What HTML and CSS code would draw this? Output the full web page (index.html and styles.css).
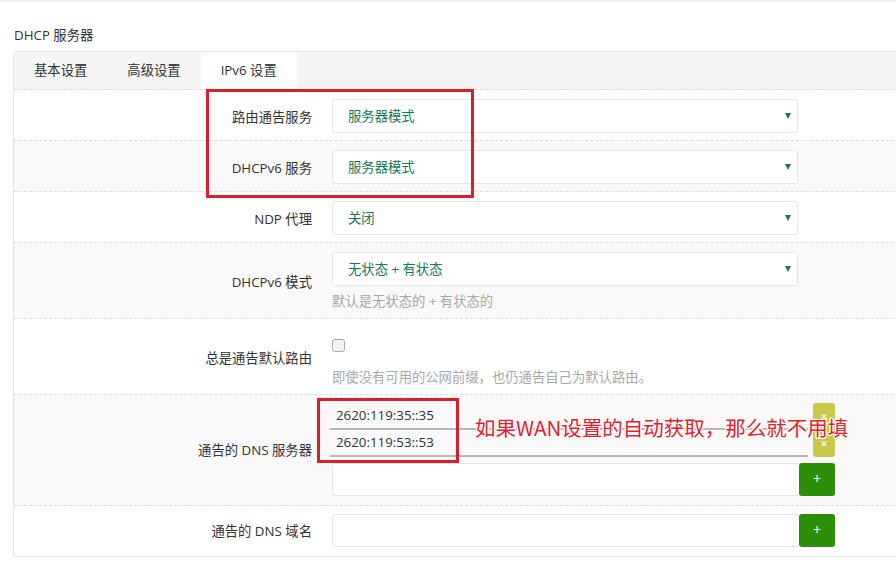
FILE: index.html
```html
<!DOCTYPE html>
<html lang="zh-CN">
<head>
<meta charset="utf-8">
<title>DHCP 服务器</title>
<link rel="stylesheet" href="styles.css">
</head>
<body>
<div class="page">
  <div class="topline"></div>
  <h3 class="title">DHCP 服务器</h3>
  <div class="panel">
    <div class="tabs">
      <span class="tab">基本设置</span>
      <span class="tab">高级设置</span>
      <span class="tab active">IPv6 设置</span>
    </div>
    <div class="row">
      <div class="label">路由通告服务</div>
      <div class="field"><div class="select">服务器模式<span class="arrow"></span></div></div>
    </div>
    <div class="row alt">
      <div class="label">DHCPv6 服务</div>
      <div class="field"><div class="select">服务器模式<span class="arrow"></span></div></div>
    </div>
    <div class="row">
      <div class="label">NDP 代理</div>
      <div class="field"><div class="select">关闭<span class="arrow"></span></div></div>
    </div>
    <div class="row alt">
      <div class="label">DHCPv6 模式</div>
      <div class="field">
        <div class="select">无状态 + 有状态<span class="arrow"></span></div>
        <div class="help">默认是无状态的 + 有状态的</div>
      </div>
    </div>
    <div class="row">
      <div class="label">总是通告默认路由</div>
      <div class="field">
        <div class="check-line"><span class="checkbox"></span></div>
        <div class="help">即使没有可用的公网前缀，也仍通告自己为默认路由。</div>
      </div>
    </div>
    <div class="row alt dyn-row">
      <div class="label">通告的 DNS 服务器</div>
      <div class="field">
        <div class="entry"><span class="entry-value">2620:119:35::35</span><span class="btn-remove">×</span></div>
        <div class="entry"><span class="entry-value">2620:119:53::53</span><span class="btn-remove">×</span></div>
        <div class="add-line"><span class="text-input"></span><span class="btn-add">+</span></div>
      </div>
    </div>
    <div class="row last dyn-row">
      <div class="label">通告的 DNS 域名</div>
      <div class="field">
        <div class="add-line"><span class="text-input"></span><span class="btn-add">+</span></div>
      </div>
    </div>
  </div>
  <div class="mark mark-1"></div>
  <div class="mark mark-2"></div>
  <div class="note">如果WAN设置的自动获取，那么就不用填</div>
</div>
</body>
</html>
```
FILE: styles.css
```css
html, body {
  margin: 0;
  padding: 0;
  background: #fff;
  overflow: hidden;
}
body {
  font-family: "Open Sans", "Noto Sans CJK SC", sans-serif;
  font-size: 13.33px;
  color: #333;
}
.page {
  position: relative;
  width: 896px;
  height: 568px;
  overflow: hidden;
}
.topline {
  height: 2px;
  background: #f0f0f0;
}
.title {
  margin: 23px 0 6px 14px;
  font-size: 13.33px;
  font-weight: normal;
  line-height: 20px;
  color: #333;
}
.panel {
  margin-left: 13px;
  width: 900px;
  border: 1px solid #e4e4e4;
  border-radius: 3px;
  background: #fff;
}
.tabs {
  display: flex;
  height: 37px;
  background: #f5f5f5;
  border-bottom: 1px dashed #dcdcdc;
}
.tab {
  padding: 0 20px;
  line-height: 37px;
  color: #333;
}
.tab.active {
  background: #fff;
}
.row {
  display: grid;
  grid-template-columns: 298px 1fr;
  column-gap: 20px;
  align-items: center;
  padding: 9px 0 7px;
  border-bottom: 1px dashed #dcdcdc;
}
.row.alt {
  background: #f9f9f9;
}
.row.last {
  border-bottom: none;
}
.dyn-row {
  padding: 8px 0 9px;
}
.label {
  text-align: right;
  color: #333;
}
.field {
  display: flex;
  flex-direction: column;
}
.select {
  position: relative;
  box-sizing: border-box;
  width: 466px;
  height: 34px;
  line-height: 32px;
  padding-left: 15px;
  border: 1px solid #e6e6e6;
  border-radius: 3px;
  background: #fff;
  color: #13795b;
}
.arrow {
  position: absolute;
  right: 6px;
  top: 13px;
  width: 0;
  height: 0;
  border-left: 3px solid transparent;
  border-right: 3px solid transparent;
  border-top: 6px solid #13795b;
}
.help {
  margin-top: 5px;
  line-height: 20px;
  font-size: 13.33px;
  color: #a8a8a8;
}
.check-line {
  height: 34px;
  display: flex;
  align-items: center;
}
.checkbox {
  box-sizing: border-box;
  width: 13px;
  height: 13px;
  border: 1px solid #a9a9a9;
  border-radius: 3px;
  background: #f2f2f2;
}
.entry {
  display: flex;
  align-items: stretch;
  height: 27px;
}
.entry-value {
  box-sizing: border-box;
  width: 478px;
  margin-left: -2px;
  padding-left: 6px;
  line-height: 24px;
  border-bottom: 2px solid #b8b8b8;
  color: #333;
}
.btn-remove {
  width: 22px;
  margin-left: 5px;
  background: #c9c94b;
  color: #f4f4d0;
  text-align: center;
  line-height: 27px;
  font-size: 13px;
  font-weight: bold;
}
.entry:first-child .btn-remove {
  border-radius: 3px 3px 0 0;
}
.entry:nth-child(2) .btn-remove {
  border-radius: 0 0 3px 3px;
}
.add-line {
  display: flex;
  height: 33px;
}
.entry + .add-line {
  margin-top: 6px;
}
.text-input {
  box-sizing: border-box;
  width: 468px;
  border: 1px solid #e6e6e6;
  border-radius: 3px;
  background: #fff;
}
.btn-add {
  width: 36px;
  margin-left: -1px;
  border-radius: 3px;
  background: #2b8f0a;
  color: #fff;
  text-align: center;
  line-height: 31px;
  font-size: 14px;
}
.mark {
  position: absolute;
  box-sizing: border-box;
  border: 3px solid #dc1d2b;
}
.mark-1 {
  left: 206px;
  top: 89px;
  width: 268px;
  height: 109px;
}
.mark-2 {
  left: 317px;
  top: 398px;
  width: 142px;
  height: 65px;
}
.note {
  position: absolute;
  left: 475px;
  top: 414px;
  font-family: "Noto Sans CJK SC", sans-serif;
  font-size: 20.5px;
  line-height: 26px;
  color: #e3202c;
  white-space: nowrap;
  text-shadow: 1px 0 0 #fff, -1px 0 0 #fff, 0 1px 0 #fff, 0 -1px 0 #fff, 1px 1px 0 #fff, -1px -1px 0 #fff, 1px -1px 0 #fff, -1px 1px 0 #fff;
}
```
